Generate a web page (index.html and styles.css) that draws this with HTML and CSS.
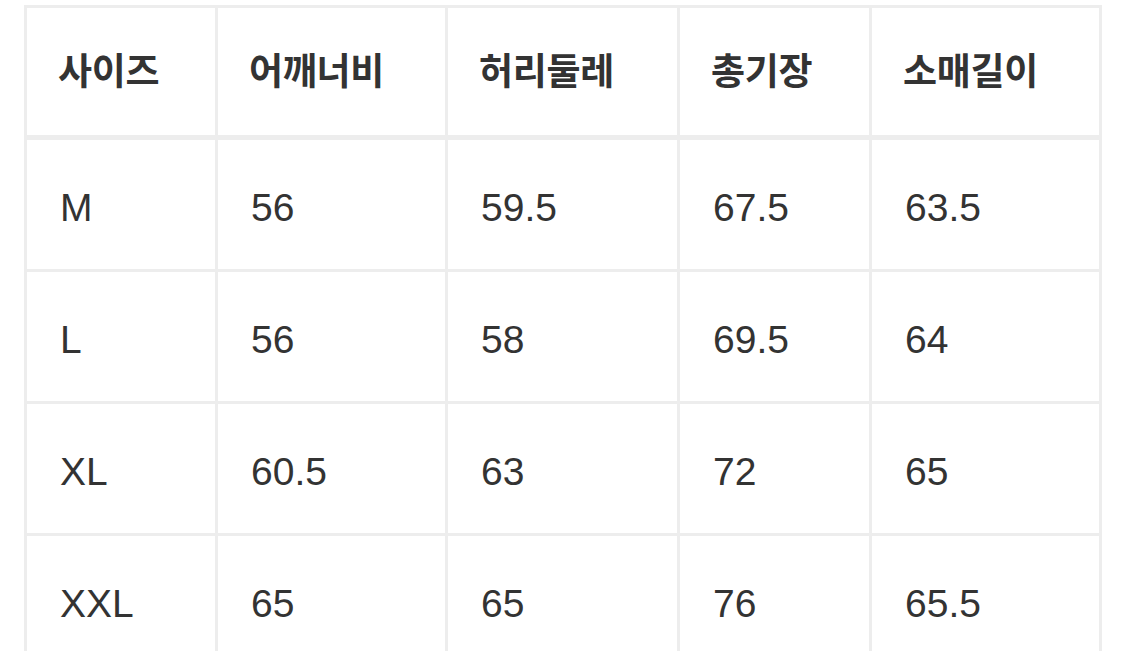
FILE: index.html
```html
<!DOCTYPE html>
<html lang="ko">
<head>
<meta charset="utf-8">
<title>사이즈</title>
<link rel="stylesheet" href="styles.css">
</head>
<body>
<table class="size-table">
  <colgroup>
    <col class="c1"><col class="c2"><col class="c3"><col class="c4"><col class="c5">
  </colgroup>
  <thead>
    <tr><th>사이즈</th><th>어깨너비</th><th>허리둘레</th><th>총기장</th><th>소매길이</th></tr>
  </thead>
  <tbody>
    <tr><td>M</td><td>56</td><td>59.5</td><td>67.5</td><td>63.5</td></tr>
    <tr><td>L</td><td>56</td><td>58</td><td>69.5</td><td>64</td></tr>
    <tr><td>XL</td><td>60.5</td><td>63</td><td>72</td><td>65</td></tr>
    <tr><td>XXL</td><td>65</td><td>65</td><td>76</td><td>65.5</td></tr>
  </tbody>
</table>
</body>
</html>
```

FILE: styles.css
```css
html, body {
  background: #ffffff;
}
body {
  margin: 5px 0 0 24px;
  overflow: hidden;
}
.size-table {
  table-layout: fixed;
  width: 1078px;
  border-collapse: separate;
  border-spacing: 0;
  border-top: 3px solid #ededed;
  border-left: 3px solid #ededed;
  color: #333333;
}
.c1 { width: 191px; }
.c2 { width: 230px; }
.c3 { width: 232px; }
.c4 { width: 192px; }
.c5 { width: 230px; }
.size-table th,
.size-table td {
  box-sizing: border-box;
  text-align: left;
  vertical-align: middle;
  border-right: 3px solid #ededed;
  border-bottom: 3px solid #ededed;
  white-space: nowrap;
}
.size-table th {
  height: 132px;
  padding: 0 0 6px 31px;
  border-bottom-width: 5px;
  font-family: "Noto Sans CJK KR", "Noto Sans", sans-serif;
  font-weight: 700;
  font-size: 37px;
  letter-spacing: -0.3px;
}
.size-table td {
  height: 132px;
  padding: 6px 0 0 33px;
  font-family: "Liberation Sans", Arial, sans-serif;
  font-size: 39px;
  font-weight: 400;
}
```
